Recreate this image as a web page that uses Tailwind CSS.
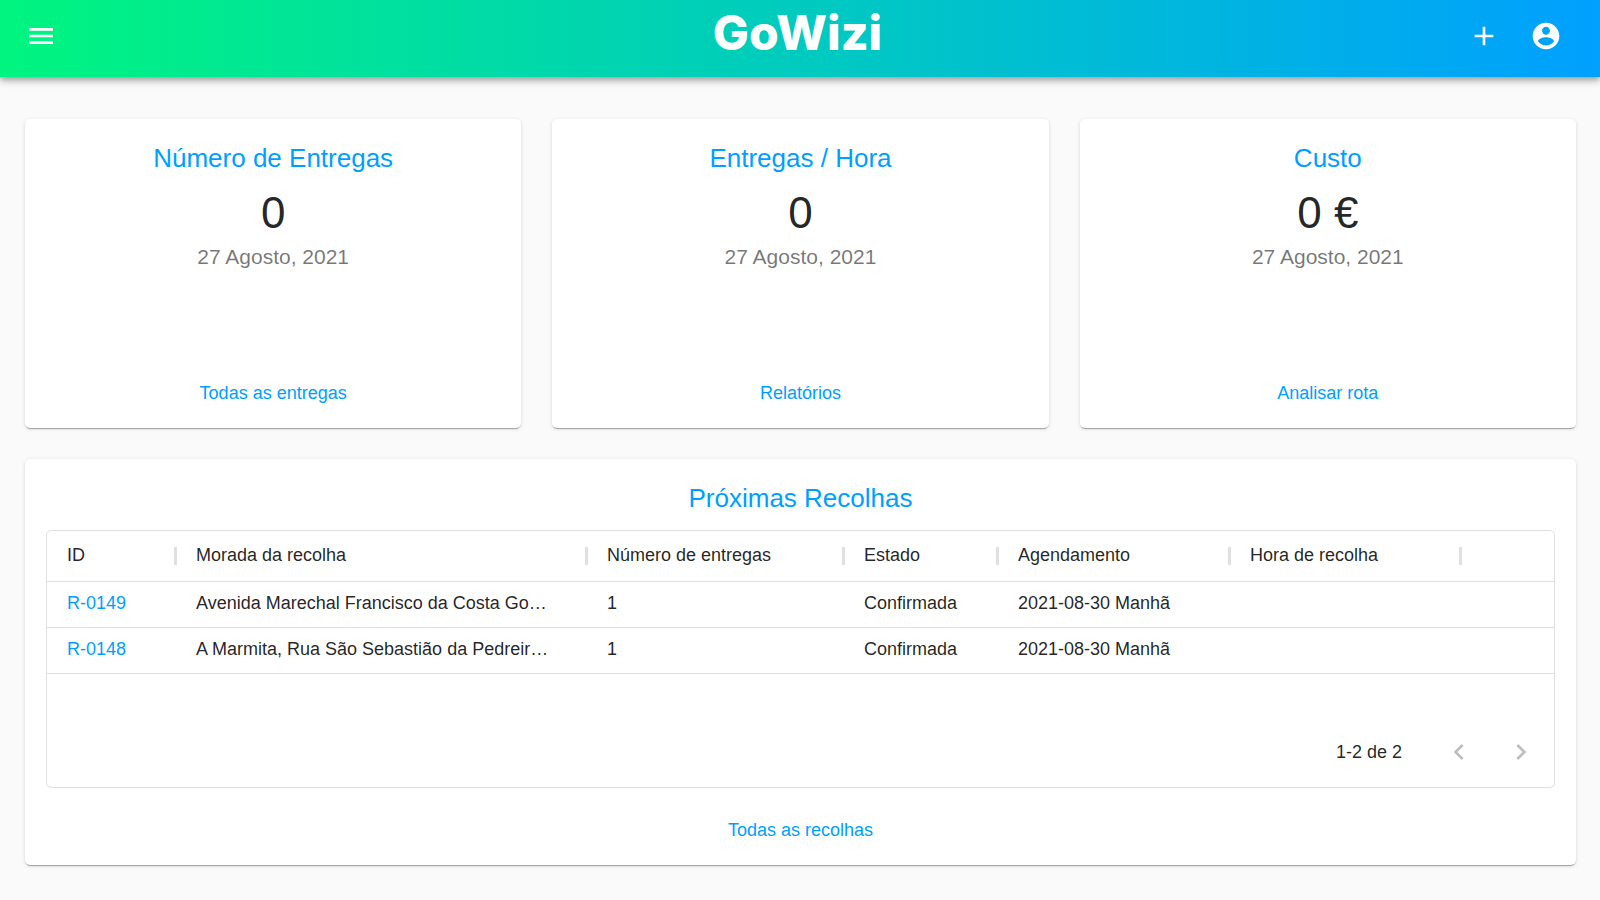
<!DOCTYPE html>
<html lang="pt">
<head>
    <meta charset="UTF-8">
    <meta name="viewport" content="width=device-width, initial-scale=1.0">
    <title>GoWizi</title>
    <script src="https://cdn.jsdelivr.net/npm/@tailwindcss/browser@4"></script>
</head>
<body class="min-h-screen bg-[#fafafa] font-['Liberation_Sans',Arial,sans-serif] text-lg text-black/87">

<header class="relative grid h-[77px] grid-cols-[1fr_auto_1fr] items-start bg-linear-to-r/srgb from-[#00f57f] to-[#00a0ff] pt-[5px] pr-[23px] pl-[10px] text-white shadow-[0_3px_5px_-1px_rgba(0,0,0,0.2),0_5px_6px_0_rgba(0,0,0,0.14),0_1px_13px_0_rgba(0,0,0,0.12)]">
    <button type="button" aria-label="Menu" class="flex size-[62px] items-center justify-center">
        <svg class="size-8" viewBox="0 0 24 24" fill="currentColor"><path d="M3 18h18v-2H3v2zm0-5h18v-2H3v2zm0-7v2h18V6H3z"/></svg>
    </button>
    <a href="#" class="ml-2 font-[Inter,sans-serif] text-5xl leading-[56px] font-extrabold">GoWizi</a>
    <div class="flex justify-end">
        <button type="button" aria-label="Adicionar" class="flex size-[62px] items-center justify-center">
            <svg class="size-8" viewBox="0 0 24 24" fill="currentColor"><path d="M19 13h-6v6h-2v-6H5v-2h6V5h2v6h6v2z"/></svg>
        </button>
        <button type="button" aria-label="Conta" class="flex size-[62px] items-center justify-center">
            <svg class="size-8" viewBox="0 0 24 24" fill="currentColor"><path d="M12 2C6.48 2 2 6.48 2 12s4.48 10 10 10 10-4.48 10-10S17.52 2 12 2zm0 3c1.66 0 3 1.34 3 3s-1.34 3-3 3-3-1.34-3-3 1.34-3 3-3zm0 14.2c-2.5 0-4.71-1.28-6-3.22.03-1.99 4-3.08 6-3.08 1.99 0 5.97 1.09 6 3.08-1.29 1.94-3.5 3.22-6 3.22z"/></svg>
        </button>
    </div>
</header>

<main class="flex flex-col gap-[31px] pt-[42px] pr-6 pb-8 pl-[25px]">
    <div class="grid grid-cols-3 gap-[31px]">
        <section class="flex min-h-[309px] flex-col items-center rounded-[5px] bg-white p-[21px] shadow-[0_3px_1px_-2px_rgba(0,0,0,0.2),0_1px_1px_0_rgba(0,0,0,0.14),0_1px_4px_0_rgba(0,0,0,0.12)]">
            <h2 class="mb-[10px] text-[26px] leading-9 text-[#009fff]">Número de Entregas</h2>
            <p class="text-[44px] leading-[54px]">0</p>
            <p class="text-[21px] leading-[34px] text-black/54">27 Agosto, 2021</p>
            <a href="#" class="mt-auto leading-7 text-[#009fff]">Todas as entregas</a>
        </section>
        <section class="flex min-h-[309px] flex-col items-center rounded-[5px] bg-white p-[21px] shadow-[0_3px_1px_-2px_rgba(0,0,0,0.2),0_1px_1px_0_rgba(0,0,0,0.14),0_1px_4px_0_rgba(0,0,0,0.12)]">
            <h2 class="mb-[10px] text-[26px] leading-9 text-[#009fff]">Entregas / Hora</h2>
            <p class="text-[44px] leading-[54px]">0</p>
            <p class="text-[21px] leading-[34px] text-black/54">27 Agosto, 2021</p>
            <a href="#" class="mt-auto leading-7 text-[#009fff]">Relatórios</a>
        </section>
        <section class="flex min-h-[309px] flex-col items-center rounded-[5px] bg-white p-[21px] shadow-[0_3px_1px_-2px_rgba(0,0,0,0.2),0_1px_1px_0_rgba(0,0,0,0.14),0_1px_4px_0_rgba(0,0,0,0.12)]">
            <h2 class="mb-[10px] text-[26px] leading-9 text-[#009fff]">Custo</h2>
            <p class="text-[44px] leading-[54px]">0 €</p>
            <p class="text-[21px] leading-[34px] text-black/54">27 Agosto, 2021</p>
            <a href="#" class="mt-auto leading-7 text-[#009fff]">Analisar rota</a>
        </section>
    </div>

    <section class="flex flex-col items-center rounded-[5px] bg-white p-[21px] shadow-[0_3px_1px_-2px_rgba(0,0,0,0.2),0_1px_1px_0_rgba(0,0,0,0.14),0_1px_4px_0_rgba(0,0,0,0.12)]">
        <h2 class="mb-[14px] text-[26px] leading-9 text-[#009fff]">Próximas Recolhas</h2>

        <div class="flex min-h-[258px] w-full flex-col rounded-[5px] border border-[#e0e0e0]">
            <table class="w-full table-fixed border-collapse text-left">
                <colgroup>
                    <col class="w-[129px]">
                    <col class="w-[411px]">
                    <col class="w-[257px]">
                    <col class="w-[154px]">
                    <col class="w-[232px]">
                    <col class="w-[231px]">
                    <col>
                </colgroup>
                <thead>
                    <tr class="h-[50px] border-b border-[#e0e0e0]">
                        <th class="relative px-5 pb-0.5 font-normal">ID<span class="absolute top-4 -right-px h-[18px] w-[3px] bg-[#e0e0e0]"></span></th>
                        <th class="relative px-5 pb-0.5 font-normal">Morada da recolha<span class="absolute top-4 -right-px h-[18px] w-[3px] bg-[#e0e0e0]"></span></th>
                        <th class="relative px-5 pb-0.5 font-normal">Número de entregas<span class="absolute top-4 -right-px h-[18px] w-[3px] bg-[#e0e0e0]"></span></th>
                        <th class="relative px-5 pb-0.5 font-normal">Estado<span class="absolute top-4 -right-px h-[18px] w-[3px] bg-[#e0e0e0]"></span></th>
                        <th class="relative px-5 pb-0.5 font-normal">Agendamento<span class="absolute top-4 -right-px h-[18px] w-[3px] bg-[#e0e0e0]"></span></th>
                        <th class="relative px-5 pb-0.5 font-normal">Hora de recolha<span class="absolute top-4 -right-px h-[18px] w-[3px] bg-[#e0e0e0]"></span></th>
                        <td></td>
                    </tr>
                </thead>
                <tbody>
                    <tr class="h-[46px] border-b border-[#e0e0e0]">
                        <td class="px-5 pb-0.5"><a href="#" class="text-[#009fff]">R-0149</a></td>
                        <td class="truncate px-5 pb-0.5">Avenida Marechal Francisco da Costa Go…</td>
                        <td class="px-5 pb-0.5">1</td>
                        <td class="px-5 pb-0.5">Confirmada</td>
                        <td class="px-5 pb-0.5">2021-08-30 Manhã</td>
                        <td></td>
                        <td></td>
                    </tr>
                    <tr class="h-[46px] border-b border-[#e0e0e0]">
                        <td class="px-5 pb-0.5"><a href="#" class="text-[#009fff]">R-0148</a></td>
                        <td class="truncate px-5 pb-0.5">A Marmita, Rua São Sebastião da Pedreir…</td>
                        <td class="px-5 pb-0.5">1</td>
                        <td class="px-5 pb-0.5">Confirmada</td>
                        <td class="px-5 pb-0.5">2021-08-30 Manhã</td>
                        <td></td>
                        <td></td>
                    </tr>
                </tbody>
            </table>

            <div class="mt-auto flex h-[70px] items-center justify-end pr-[2px]">
                <p class="mr-[26px]">1-2 de 2</p>
                <button type="button" disabled aria-label="Página anterior" class="flex size-[62px] items-center justify-center text-black/26">
                    <svg class="size-8" viewBox="0 0 24 24" fill="currentColor"><path d="M15.41 7.41L14 6l-6 6 6 6 1.41-1.41L10.83 12z"/></svg>
                </button>
                <button type="button" disabled aria-label="Página seguinte" class="flex size-[62px] items-center justify-center text-black/26">
                    <svg class="size-8" viewBox="0 0 24 24" fill="currentColor"><path d="M10 6L8.59 7.41 13.17 12l-4.58 4.59L10 18l6-6z"/></svg>
                </button>
            </div>
        </div>

        <a href="#" class="mt-7 leading-7 text-[#009fff]">Todas as recolhas</a>
    </section>
</main>

</body>
</html>
